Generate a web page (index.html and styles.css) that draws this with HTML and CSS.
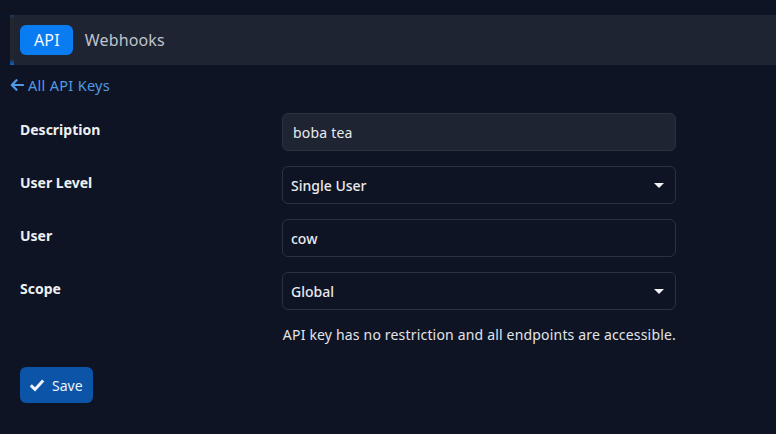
FILE: index.html
```html
<!DOCTYPE html>
<html>
<head>
<meta charset="utf-8">
<link rel="stylesheet" href="styles.css">
</head>
<body>
<div class="page">
  <div class="tabbar">
    <div class="edge"></div>
    <div class="tabs">
      <span class="tab active">API</span>
      <span class="tab">Webhooks</span>
    </div>
  </div>
  <a class="back" href="#"><svg class="arrow" viewBox="0 0 14 12" width="14" height="12"><path d="M6.5 1.2 L1.8 6 L6.5 10.8 M2 6 H13" fill="none" stroke="currentColor" stroke-width="2.2" stroke-linecap="round" stroke-linejoin="round"/></svg>All API Keys</a>
  <form class="form">
    <div class="row">
      <label class="label">Description</label>
      <div class="field"><div class="input filled">boba tea</div></div>
    </div>
    <div class="row">
      <label class="label">User Level</label>
      <div class="field"><div class="input select">Single User<span class="caret"></span></div></div>
    </div>
    <div class="row">
      <label class="label">User</label>
      <div class="field"><div class="input plain">cow</div></div>
    </div>
    <div class="row">
      <label class="label">Scope</label>
      <div class="field"><div class="input select">Global<span class="caret"></span></div></div>
    </div>
    <div class="row help-row">
      <span class="label"></span>
      <div class="field help">API key has no restriction and all endpoints are accessible.</div>
    </div>
    <div class="actions">
      <button type="button" class="save"><svg class="check" viewBox="0 0 16 14" width="16" height="14"><path d="M1.8 7.4 L6 11.4 L14.2 2.6" fill="none" stroke="currentColor" stroke-width="3"/></svg>Save</button>
    </div>
  </form>
</div>
</body>
</html>
```
FILE: styles.css
```css
html, body {
  margin: 0;
  padding: 0;
  background: #0e1424;
  font-family: "Noto Sans", "Open Sans", sans-serif;
  color: #e6e8ec;
}
.page {
  padding: 15px 0 0 10px;
}
.tabbar {
  display: flex;
  height: 50px;
  background: #1f2433;
}
.edge {
  width: 4px;
  background: linear-gradient(to bottom, #1c3a66 0%, #22262d 8%, #22262d 88%, #0d66d0 100%);
}
.tabs {
  display: flex;
  align-items: center;
  gap: 12px;
  padding-left: 6px;
}
.tab {
  font-size: 16px;
  color: #bfc3cb;
  line-height: 30px;
  letter-spacing: 0.15px;
}
.tab.active {
  background: #0a7cf2;
  color: #f4f8ff;
  border-radius: 6px;
  padding: 0 13px 0 14px;
}
.back {
  display: inline-flex;
  align-items: center;
  gap: 4px;
  margin-top: 11px;
  color: #4f9be6;
  font-size: 14.5px;
  letter-spacing: 0.3px;
  text-decoration: none;
  line-height: 18px;
}
.arrow { color: #4f9be6; }
.form {
  margin-top: 17px;
  padding-left: 10px;
  width: 656px;
}
.row {
  display: flex;
  align-items: center;
  margin-bottom: 15px;
}
.label {
  width: 262px;
  font-weight: 700;
  font-size: 14px;
  color: #eef0f3;
  margin-top: -6px;
}
.field {
  flex: 1;
}
.input {
  box-sizing: border-box;
  height: 38px;
  border: 1px solid #2b3142;
  border-radius: 6px;
  display: flex;
  align-items: center;
  font-size: 14px;
  padding: 0 8px;
  color: #e9ebef;
}
.input.filled {
  background: #1f2433;
  padding-left: 10px;
  letter-spacing: 0.2px;
}
.select {
  justify-content: space-between;
  font-weight: 500;
}
.plain { font-weight: 500; }
.caret {
  width: 0;
  height: 0;
  border-left: 5px solid transparent;
  border-right: 5px solid transparent;
  border-top: 5px solid #f2f2f2;
  margin-right: 3px;
}
.help-row { margin-top: 10px; margin-bottom: 0; }
.help {
  font-size: 14px;
  letter-spacing: 0.18px;
  color: #e2e4e8;
  padding-left: 1px;
  white-space: nowrap;
}
.actions {
  margin-top: 23px;
}
.save {
  display: inline-flex;
  align-items: center;
  gap: 7px;
  height: 36px;
  padding: 0 10px 0 9px;
  background: #0c54a8;
  color: #eef3fb;
  border: none;
  border-radius: 6px;
  font-family: inherit;
  font-size: 14px;
}
```
